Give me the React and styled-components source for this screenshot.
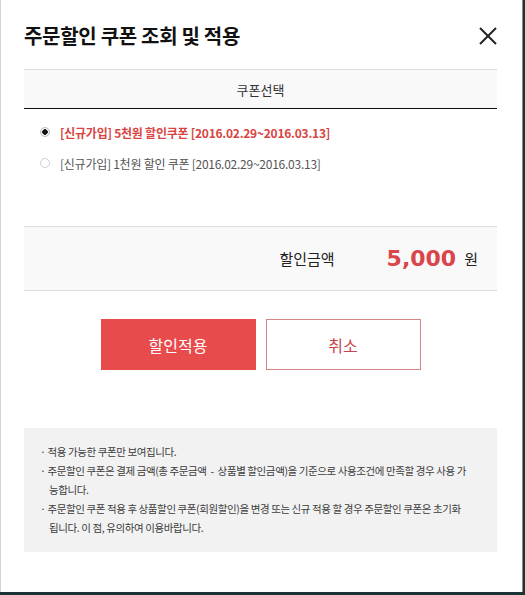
import React, { useState } from "react";
import styled, { createGlobalStyle } from "styled-components";

const GlobalStyle = createGlobalStyle`
  html, body {
    margin: 0;
    padding: 0;
    background: #1d3434;
  }
  body {
    font-family: "Noto Sans CJK KR", "Noto Sans", sans-serif;
    color: #222;
  }
`;

const coupons = [
  { id: 1, label: "[신규가입] 5천원 할인쿠폰 [2016.02.29~2016.03.13]" },
  { id: 2, label: "[신규가입] 1천원 할인 쿠폰 [2016.02.29~2016.03.13]" },
];

const notes = [
  "적용 가능한 쿠폰만 보여집니다.",
  "주문할인 쿠폰은 결제 금액(총 주문금액\u00a0 - \u00a0상품별 할인금액)을 기준으로 사용조건에 만족할 경우 사용 가능합니다.",
  "주문할인 쿠폰 적용 후 상품할인 쿠폰(회원할인)을 변경 또는 신규 적용 할 경우 주문할인 쿠폰은 초기화 됩니다. 이 점, 유의하여 이용바랍니다.",
];

const App = () => {
  const [selected, setSelected] = useState(1);

  return (
    <>
      <GlobalStyle />
      <Modal>
        <Header>
          <Title>주문할인 쿠폰 조회 및 적용</Title>
          <CloseButton type="button" aria-label="닫기">
            <svg width="20" height="20" viewBox="0 0 20 20">
              <path d="M2 2 L18 18 M18 2 L2 18" stroke="#222" strokeWidth="2" />
            </svg>
          </CloseButton>
        </Header>

        <TableHead>쿠폰선택</TableHead>

        <CouponList>
          {coupons.map((c) => (
            <CouponRow key={c.id} onClick={() => setSelected(c.id)}>
              <Radio $checked={selected === c.id} />
              <CouponLabel $active={selected === c.id}>{c.label}</CouponLabel>
            </CouponRow>
          ))}
        </CouponList>

        <Summary>
          <SummaryLabel>할인금액</SummaryLabel>
          <Amount>5,000</Amount>
          <Unit>원</Unit>
        </Summary>

        <Buttons>
          <Button type="button" $primary>할인적용</Button>
          <Button type="button">취소</Button>
        </Buttons>

        <Notes>
          {notes.map((n, i) => (
            <Note key={i}>· {n}</Note>
          ))}
        </Notes>
      </Modal>
    </>
  );
};

const Modal = styled.div`
  box-sizing: border-box;
  width: 523px;
  height: 592px;
  background: #fff;
  border-left: 1px solid #d4d4d4;
  border-right: 1px solid #8a8a8a;
  padding: 0 25px 0 23px;
  display: flex;
  flex-direction: column;
`;

const Header = styled.div`
  height: 70px;
  display: flex;
  align-items: center;
  justify-content: space-between;
  padding-top: 2px;
  box-sizing: border-box;
  border-bottom: 1px solid #dcdcdc;
`;

const Title = styled.h1`
  margin: 0;
  font-size: 20px;
  font-weight: 700;
  letter-spacing: -0.3px;
  color: #111;
`;

const CloseButton = styled.button`
  border: 0;
  background: none;
  padding: 0;
  margin-right: -1px;
  display: flex;
  cursor: pointer;
`;

const TableHead = styled.div`
  height: 38px;
  background: #f9f9f9;
  border-bottom: 1px solid #111;
  display: flex;
  align-items: center;
  justify-content: center;
  font-size: 13px;
  color: #333;
`;

const CouponList = styled.div`
  display: flex;
  flex-direction: column;
  gap: 13px;
  padding: 14px 0 0 16px;
  height: 117px;
  box-sizing: border-box;
`;

const CouponRow = styled.label`
  display: flex;
  align-items: center;
  gap: 10px;
  height: 18px;
  cursor: pointer;
`;

const Radio = styled.span`
  box-sizing: border-box;
  width: 10px;
  height: 10px;
  border-radius: 50%;
  border: 1px solid ${(p) => (p.$checked ? "#bbb" : "#d0d0d0")};
  background: ${(p) =>
    p.$checked ? "radial-gradient(circle, #111 0 2.5px, #f4f4f4 3px)" : "#fff"};
  flex: none;
`;

const CouponLabel = styled.span`
  font-size: 12px;
  font-weight: ${(p) => (p.$active ? 700 : 400)};
  color: ${(p) => (p.$active ? "#d9443f" : "#555")};
  letter-spacing: -0.25px;
`;

const Summary = styled.div`
  height: 65px;
  box-sizing: border-box;
  border-top: 1px solid #dcdcdc;
  border-bottom: 1px solid #dcdcdc;
  background: #f9f9f9;
  display: flex;
  align-items: center;
  justify-content: flex-end;
  padding-right: 19px;
`;

const SummaryLabel = styled.span`
  font-size: 15px;
  color: #222;
  margin-right: 52px;
`;

const Amount = styled.span`
  font-family: "DejaVu Sans", Verdana, sans-serif;
  font-weight: 700;
  font-size: 22px;
  color: #d9454a;
  margin-right: 8px;
`;

const Unit = styled.span`
  font-size: 15px;
  color: #222;
`;

const Buttons = styled.div`
  display: flex;
  justify-content: center;
  gap: 10px;
  padding-top: 28px;
  height: 137px;
  box-sizing: border-box;
`;

const Button = styled.button`
  width: 155px;
  height: 51px;
  box-sizing: border-box;
  font-family: inherit;
  font-size: 16px;
  cursor: pointer;
  background: ${(p) => (p.$primary ? "#e84b4c" : "#fff")};
  color: ${(p) => (p.$primary ? "#fff" : "#c8444a")};
  border: 1px solid ${(p) => (p.$primary ? "#e84b4c" : "#d68585")};
`;

const Notes = styled.div`
  background: #f2f2f2;
  padding: 14px 27px 17px 16px;
  height: 124px;
  box-sizing: border-box;
`;

const Note = styled.p`
  margin: 0;
  font-size: 10.5px;
  line-height: 19px;
  color: #3c3c3c;
  padding-left: 9px;
  text-indent: -9px;
  letter-spacing: -0.4px;
`;

export default App;
